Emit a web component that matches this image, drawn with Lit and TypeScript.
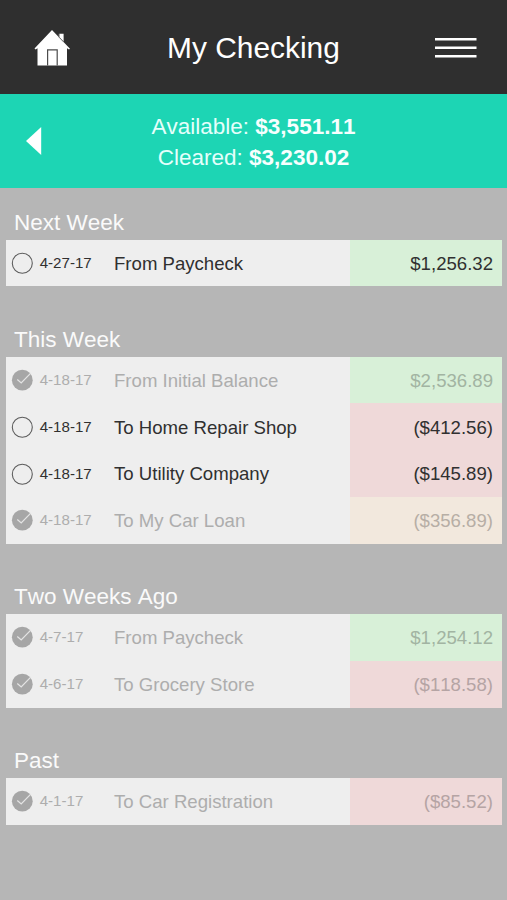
import { LitElement, html, css, svg } from "lit";
import { customElement, property } from "lit/decorators.js";
import { classMap } from "lit/directives/class-map.js";

type Kind = "income" | "expense" | "transfer";
interface Entry {
  date: string;
  payee: string;
  amount: string;
  kind: Kind;
  cleared: boolean;
}
interface Period {
  title: string;
  entries: Entry[];
}

const entry = (date: string, payee: string, amount: string, kind: Kind, cleared: boolean): Entry => ({
  date, payee, amount, kind, cleared,
});

const PERIODS: Period[] = [
  { title: "Next Week", entries: [entry("4-27-17", "From Paycheck", "$1,256.32", "income", false)] },
  {
    title: "This Week",
    entries: [
      entry("4-18-17", "From Initial Balance", "$2,536.89", "income", true),
      entry("4-18-17", "To Home Repair Shop", "($412.56)", "expense", false),
      entry("4-18-17", "To Utility Company", "($145.89)", "expense", false),
      entry("4-18-17", "To My Car Loan", "($356.89)", "transfer", true),
    ],
  },
  {
    title: "Two Weeks Ago",
    entries: [
      entry("4-7-17", "From Paycheck", "$1,254.12", "income", true),
      entry("4-6-17", "To Grocery Store", "($118.58)", "expense", true),
    ],
  },
  { title: "Past", entries: [entry("4-1-17", "To Car Registration", "($85.52)", "expense", true)] },
];

@customElement("transaction-row")
export class TransactionRow extends LitElement {
  @property({ attribute: false }) entry!: Entry;

  static styles = css`
    :host { display: block; }
    .row {
      display: grid;
      grid-template-columns: 34px 74.3px 1fr 152px;
      align-items: center;
      height: 46.8px;
      color: #303030;
      font-size: 18.6px;
      white-space: nowrap;
    }
    .cleared { color: #adadad; }
    .mark { display: block; width: 22px; height: 22px; margin-left: 5.7px; }
    .date { font-size: 15.1px; line-height: 20px; }
    .payee { padding-top: 1.6px; line-height: 22px; font-kerning: normal; }
    .amount {
      display: flex;
      align-items: center;
      justify-content: flex-end;
      box-sizing: border-box;
      height: 100%;
      padding: 1.6px 9px 0 0;
      line-height: 22px;
    }
    .income { background: #d8f0d8; }
    .expense { background: #efd9d9; }
    .transfer { background: #f2e8dd; }
    .cleared .income { color: #a2b4a2; }
    .cleared .expense { color: #b5a4a4; }
    .cleared .transfer { color: #b7aea5; }
  `;

  render() {
    const { date, payee, amount, kind, cleared } = this.entry;
    return html`
      <div class=${classMap({ row: true, cleared })}>
        <svg class="mark" viewBox="0 0 22 22" fill="none">
          ${cleared
            ? svg`<circle cx="11.3" cy="11.2" r="10.4" fill="#a6a6a6" />
                <path d="M6.3 10.4 10.2 13.9 20 3.9" stroke="#e4e4e4" stroke-width="1.3" />`
            : svg`<circle cx="11.3" cy="11.2" r="10" stroke="#5c5c5c" stroke-width="1.1" />`}
        </svg>
        <span class="date">${date}</span>
        <span class="payee">${payee}</span>
        <span class="amount ${kind}">${amount}</span>
      </div>
    `;
  }
}

@customElement("app-root")
export class AppRoot extends LitElement {
  static styles = css`
    :host {
      display: block;
      height: 900px;
      overflow: hidden;
      background: #b6b6b6;
      font-family: "Liberation Sans", Arial, sans-serif;
      font-kerning: none;
    }
    .header, .balance {
      display: grid;
      grid-template-columns: 104px 1fr 104px;
      align-items: center;
      box-sizing: border-box;
      color: #fff;
      text-align: center;
    }
    .header { height: 94.4px; background: #2f2f2f; }
    .title { margin: 2px 0 0; font-size: 29.9px; font-weight: 400; line-height: 36px; }
    .home { display: block; width: 36px; height: 36px; margin: 1px 0 0 34.3px; }
    .menu { display: block; width: 42px; height: 22px; margin: 1px 0 0 32px; }
    .balance { height: 93.6px; background: #1dd5b4; font-size: 22.5px; line-height: 31px; }
    .totals { color: #e4fffb; padding-top: 1.5px; }
    .totals b { color: #f7fffe; }
    .back { display: block; width: 16px; height: 28px; margin-left: 26px; }
    .heading {
      margin: 0;
      padding: 0 0 4px 14px;
      height: 70.2px;
      box-sizing: border-box;
      display: flex;
      align-items: flex-end;
      color: #fafafa;
      font-size: 22.5px;
      font-weight: 400;
      line-height: 26px;
    }
    .period:first-child .heading { height: 51.7px; }
    .card { margin: 0 5px 0 5.7px; background: #eee; }
  `;

  render() {
    return html`
      <header class="header">
        <svg class="home" viewBox="0 0 36 36" fill="#fff">
          <path d="M18 0 36 18.7 35 19.4 33 18.2V35.6H3.5V18.2L1.6 19.4.5 18.5Z" />
          <path d="M25.3 3.8H29.6V11.4L25.3 7Z" />
          <path d="M24.9 3.8V7.1L29.8 12.1" fill="none" stroke="#777" stroke-width=".7" />
          <path d="M13.6 35.6V19.8H23.2V35.6" fill="none" stroke="#4c4c4c" stroke-width="1.2" />
        </svg>
        <h1 class="title">My Checking</h1>
        <svg class="menu" viewBox="0 0 42 22" stroke="#fff" stroke-width="2.5">
          <path d="M0 2.3H41.5M0 10.7H41.5M0 19.2H41.5" />
        </svg>
      </header>
      <section class="balance">
        <svg class="back" viewBox="0 0 16 28" fill="#fff"><path d="M0 14 15.2 0V28Z" /></svg>
        <div class="totals">
          <div>Available: <b>$3,551.11</b></div>
          <div>Cleared: <b>$3,230.02</b></div>
        </div>
      </section>
      <main>
        ${PERIODS.map(
          (p) => html`
            <section class="period">
              <h2 class="heading">${p.title}</h2>
              <div class="card">
                ${p.entries.map((e) => html`<transaction-row .entry=${e}></transaction-row>`)}
              </div>
            </section>
          `,
        )}
      </main>
    `;
  }
}
